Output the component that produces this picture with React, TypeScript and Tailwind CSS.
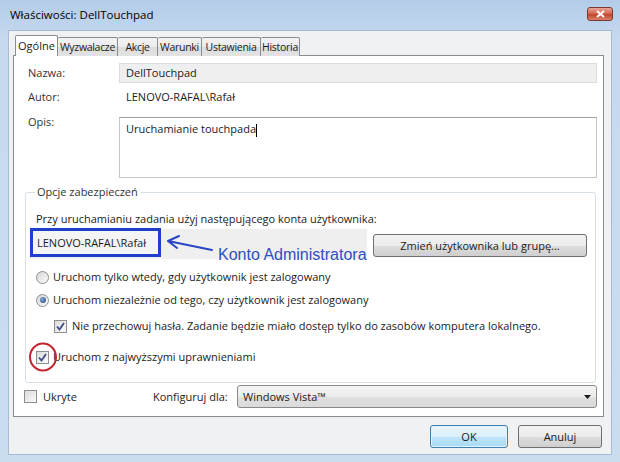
import React from "react";

function Check({ checked }: { checked?: boolean }) {
  return (
    <span className="w-[13px] h-[13px] shrink-0 border border-[#8e8f8f] bg-[linear-gradient(135deg,#dcdcdc_0%,#fbfbfb_100%)] flex items-center justify-center">
      {checked && (
        <svg width="11" height="11" viewBox="0 0 11 11">
          <path d="M2 5.5 L4.5 8.5 L9 2" fill="none" stroke="#3a4d86" strokeWidth="1.8" />
        </svg>
      )}
    </span>
  );
}

function Radio({ checked }: { checked?: boolean }) {
  return (
    <span className="w-[13px] h-[13px] shrink-0 rounded-full border border-[#8e8f8f] bg-[linear-gradient(135deg,#d6d6d6_0%,#fbfbfb_100%)] flex items-center justify-center">
      {checked && <span className="w-[6px] h-[6px] rounded-full bg-[radial-gradient(circle_at_35%_35%,#7fa7d8_0%,#24466f_100%)]" />}
    </span>
  );
}

const tabs = [
  { label: "Wyzwalacze", w: "w-[60px]" },
  { label: "Akcje", w: "w-[40px]" },
  { label: "Warunki", w: "w-[44px]" },
  { label: "Ustawienia", w: "w-[59px]" },
  { label: "Historia", w: "w-[39px]" },
];

export default function App() {
  return (
    <div className="w-[620px] h-[462px] flex flex-col bg-[linear-gradient(180deg,#b3cce8_0%,#c6d9ee_40px,#c9dcf0_100%)] font-['Open_Sans',sans-serif] text-[11px] text-[#1b1b1b] leading-[16px]">
      {/* title bar */}
      <div className="h-[30px] flex items-center justify-between pl-[10px] pr-[7px] shrink-0">
        <span className="text-[11.5px] text-black">Właściwości: DellTouchpad</span>
        <span className="w-[26px] h-[14px] -mt-[2px] rounded-[3px] border border-[#7a3a30] bg-[linear-gradient(180deg,#e8a597_0%,#d2604a_50%,#c0442c_55%,#d9826c_100%)] flex items-center justify-center">
          <svg width="9" height="8" viewBox="0 0 9 8">
            <path d="M1 1 L8 7 M8 1 L1 7" stroke="white" strokeWidth="2" />
          </svg>
        </span>
      </div>

      {/* client area */}
      <div className="mx-[8px] h-[425px] bg-[#f0f1f3] border border-[#a6bcd6] flex flex-col pl-[4px] pt-[4px]">
        {/* tabs */}
        <div className="flex items-end h-[21px] pl-[2px] relative z-10 text-[10.5px] tracking-[-0.3px]">
          <div className="w-[43px] h-[21px] bg-white border border-[#898c95] border-b-0 rounded-t-[2px] flex items-center justify-center text-[11px] tracking-normal">
            Ogólne
          </div>
          {tabs.map((t) => (
            <div
              key={t.label}
              className={`${t.w} h-[19px] border border-l-0 border-[#898c95] border-b-0 rounded-t-[2px] bg-[linear-gradient(180deg,#f3f3f3_0%,#ebebeb_50%,#dcdcdc_51%,#e3e3e3_100%)] flex items-center justify-center`}
            >
              {t.label}
            </div>
          ))}
        </div>

        {/* panel */}
        <div className="-mt-[1px] mr-[7px] h-[362px] bg-white border border-[#898c95] pl-[10px] pr-[6px] pt-[7px] flex flex-col">
          <div className="flex items-center h-[20px]">
            <span className="ml-[4px] w-[91px] text-[#333]">Nazwa:</span>
            <div className="flex-1 h-[20px] bg-[#efefef] border border-[#dcdcdc] pl-[6px] flex items-center">DellTouchpad</div>
          </div>
          <div className="flex items-center h-[20px] mt-[4px]">
            <span className="ml-[4px] w-[91px] text-[#333]">Autor:</span>
            <span className="pl-[7px]">LENOVO-RAFAL\Rafał</span>
          </div>
          <div className="flex mt-[10px] h-[61px]">
            <span className="ml-[4px] w-[91px] -mt-[3px] text-[#333]">Opis:</span>
            <div className="flex-1 border border-[#c5c7cc] border-t-[#9da0a6] bg-white pl-[6px] pt-[3px]">
              Uruchamianie touchpada<span className="inline-block w-px h-[13px] bg-black align-middle" />
            </div>
          </div>

          <fieldset className="mt-[7px] ml-[1px] mr-[1px] border border-[#d5dfe5] rounded-[3px] pl-[4px] pr-[8px] pb-[17px] min-w-0">
            <legend className="ml-[5px] px-[2px] leading-[14px] text-[#333]">Opcje zabezpieczeń</legend>
            <div className="mt-[12px] ml-[6px]">Przy uruchamianiu zadania użyj następującego konta użytkownika:</div>
            <div className="flex mt-[1px] h-[31px]">
              <div className="relative w-[337px] h-[30px] mt-[1px] bg-[#efefef]">
                <div className="absolute -top-[1px] left-0 w-[131px] h-[29px] border-[3px] border-[#1d3fcc] bg-[#f4f4f4] pl-[4px] flex items-center">
                  LENOVO-RAFAL\Rafał
                </div>
                <svg className="absolute left-0 top-0" width="337" height="34" viewBox="0 0 337 34">
                  <path d="M182 21 L138 12 M138 12 L149 7 M138 12 L147 19" fill="none" stroke="#2a46c4" strokeWidth="2" strokeLinecap="round" />
                </svg>
                <span className="absolute left-[188px] top-[17px] font-['Liberation_Sans',sans-serif] text-[16px] leading-[18px] text-[#2d4fc4]">
                  Konto Administratora
                </span>
              </div>
              <button className="ml-[6px] mt-[6px] w-[214px] h-[23px] rounded-[3px] border border-[#707070] bg-[linear-gradient(180deg,#f2f2f2_0%,#ebebeb_50%,#dddddd_51%,#cfcfcf_100%)] text-[11px]">
                Zmień użytkownika lub grupę...
              </button>
            </div>
            <div className="flex items-center gap-[4px] ml-[6px] mt-[10px] h-[16px]">
              <Radio />
              <span>Uruchom tylko wtedy, gdy użytkownik jest zalogowany</span>
            </div>
            <div className="flex items-center gap-[4px] ml-[6px] mt-[7px] h-[16px]">
              <Radio checked />
              <span>Uruchom niezależnie od tego, czy użytkownik jest zalogowany</span>
            </div>
            <div className="flex items-center gap-[5px] ml-[24px] mt-[10px] h-[16px]">
              <Check checked />
              <span>Nie przechowuj hasła. Zadanie będzie miało dostęp tylko do zasobów komputera lokalnego.</span>
            </div>
            <div className="relative flex items-center gap-[4px] ml-[6px] mt-[15px] h-[16px]">
              <Check checked />
              <span>Uruchom z najwyższymi uprawnieniami</span>
              <svg className="absolute -left-[8px] -top-[7px]" width="30" height="30" viewBox="0 0 30 30">
                <ellipse cx="15" cy="15" rx="13" ry="13.5" fill="none" stroke="#c3232e" strokeWidth="2" />
              </svg>
            </div>
          </fieldset>

          <div className="flex items-center mt-[2px] h-[23px]">
            <Check />
            <span className="ml-[6px] w-[110px]">Ukryte</span>
            <span className="w-[84px]">Konfiguruj dla:</span>
            <div className="flex-1 h-[23px] rounded-[3px] border border-[#8a8a8a] bg-[linear-gradient(180deg,#f5f5f5_0%,#ececec_50%,#e0e0e0_51%,#dadada_100%)] flex items-center justify-between pl-[5px] pr-[5px]">
              <span>Windows Vista™</span>
              <svg width="7" height="4" viewBox="0 0 7 4">
                <path d="M0 0 L7 0 L3.5 4 Z" fill="#1b1b1b" />
              </svg>
            </div>
          </div>
        </div>

        {/* buttons */}
        <div className="flex justify-end gap-[10px] mt-[8px] pr-[9px]">
          <button className="w-[78px] h-[23px] rounded-[3px] border border-[#3c7fb1] bg-[linear-gradient(180deg,#eaf6fd_0%,#d9f0fc_50%,#bee6fd_51%,#a7d9f5_100%)] text-[11px] shadow-[inset_0_0_0_1px_#e4f3fb]">
            OK
          </button>
          <button className="w-[84px] h-[23px] rounded-[3px] border border-[#707070] bg-[linear-gradient(180deg,#f2f2f2_0%,#ebebeb_50%,#dddddd_51%,#cfcfcf_100%)] text-[11px]">
            Anuluj
          </button>
        </div>
      </div>
    </div>
  );
}
